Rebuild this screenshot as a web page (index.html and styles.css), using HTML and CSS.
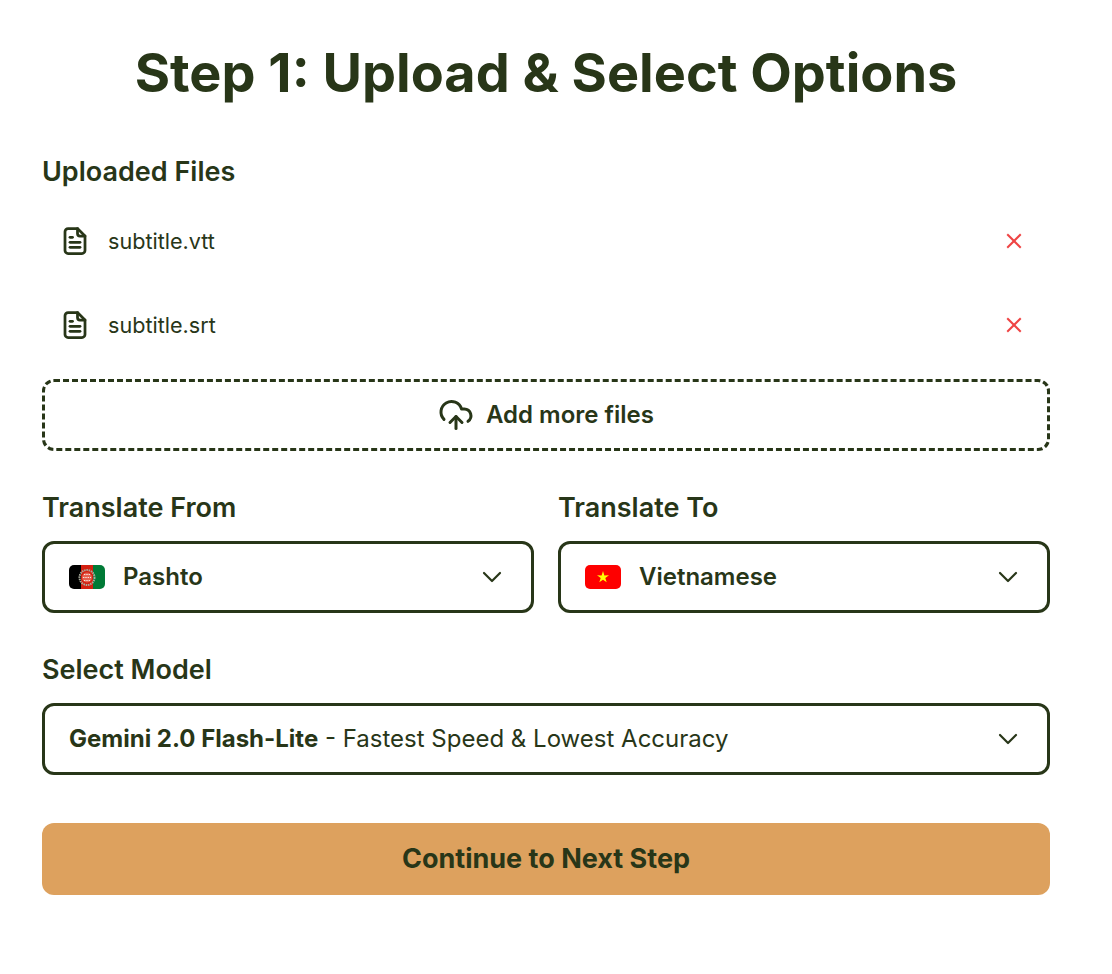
FILE: index.html
```html
<!DOCTYPE html>
<html lang="en">
<head>
    <meta charset="UTF-8">
    <meta name="viewport" content="width=device-width, initial-scale=1.0">
    <title>Upload &amp; Select Options</title>
    <link rel="stylesheet" href="styles.css">
</head>
<body>
    <div class="step-container">
        <h1 class="step-title">Step 1: Upload &amp; Select Options</h1>

        <p class="field-label files-label">Uploaded Files</p>
        <div class="file-list">
            <div class="file-row">
                <svg class="file-icon" viewBox="0 0 24 24" fill="none" stroke="currentColor" stroke-width="2.2" stroke-linecap="round" stroke-linejoin="round">
                    <path d="M14 2H6.5A2.5 2.5 0 0 0 4 4.5v15A2.5 2.5 0 0 0 6.5 22h11a2.5 2.5 0 0 0 2.5-2.5V8z"/>
                    <path d="M14 2v4a2 2 0 0 0 2 2h4"/>
                    <path d="M8 9h2"/>
                    <path d="M8 13h8"/>
                    <path d="M8 17h8"/>
                </svg>
                <span class="file-name">subtitle.vtt</span>
                <svg class="remove-icon" viewBox="0 0 24 24" fill="none" stroke="currentColor" stroke-width="2.7">
                    <path d="M3 3l18 18"/>
                    <path d="M21 3L3 21"/>
                </svg>
            </div>
            <div class="file-row">
                <svg class="file-icon" viewBox="0 0 24 24" fill="none" stroke="currentColor" stroke-width="2.2" stroke-linecap="round" stroke-linejoin="round">
                    <path d="M14 2H6.5A2.5 2.5 0 0 0 4 4.5v15A2.5 2.5 0 0 0 6.5 22h11a2.5 2.5 0 0 0 2.5-2.5V8z"/>
                    <path d="M14 2v4a2 2 0 0 0 2 2h4"/>
                    <path d="M8 9h2"/>
                    <path d="M8 13h8"/>
                    <path d="M8 17h8"/>
                </svg>
                <span class="file-name">subtitle.srt</span>
                <svg class="remove-icon" viewBox="0 0 24 24" fill="none" stroke="currentColor" stroke-width="2.7">
                    <path d="M3 3l18 18"/>
                    <path d="M21 3L3 21"/>
                </svg>
            </div>
        </div>

        <div class="add-files">
            <svg class="upload-icon" viewBox="0 0 24 24" fill="none" stroke="currentColor" stroke-width="2" stroke-linecap="round" stroke-linejoin="round">
                <path d="M12 13v8"/>
                <path d="M4 14.9A7 7 0 1 1 15.7 8h1.8a4.5 4.5 0 0 1 2.5 8.2"/>
                <path d="M8 17l4-4 4 4"/>
            </svg>
            <span class="add-text">Add more files</span>
        </div>

        <div class="language-grid">
            <div class="language-field">
                <p class="field-label">Translate From</p>
                <div class="select-box">
                    <svg class="flag" viewBox="0 0 36 24">
                        <rect width="12" height="24" fill="#000"/>
                        <rect x="12" width="12" height="24" fill="#d32011"/>
                        <rect x="24" width="12" height="24" fill="#007a36"/>
                        <circle cx="18" cy="12.5" r="7.5" fill="none" stroke="#a9ab9c" stroke-width="2" stroke-dasharray="1.5 0.8"/>
                        <circle cx="18" cy="12.5" r="5" fill="#e8604f"/>
                        <path d="M15 9.5h6M14 12.5h8M15 15.5h6" stroke="#f7e4de" stroke-width="1.1" stroke-dasharray="1.4 0.9"/>
                    </svg>
                    <span class="select-text">Pashto</span>
                    <svg class="chevron" viewBox="0 0 24 24" fill="none" stroke="currentColor" stroke-width="2.2" stroke-linecap="round" stroke-linejoin="round">
                        <path d="M4 8l8 8 8-8"/>
                    </svg>
                </div>
            </div>
            <div class="language-field">
                <p class="field-label">Translate To</p>
                <div class="select-box">
                    <svg class="flag" viewBox="0 0 36 24">
                        <rect width="36" height="24" fill="#fe0000"/>
                        <polygon points="18,6 19.4,10.4 24,10.3 20.3,13.1 21.7,17.3 18,14.7 14.3,17.3 15.7,13.1 12,10.3 16.6,10.4" fill="#ffff00"/>
                    </svg>
                    <span class="select-text">Vietnamese</span>
                    <svg class="chevron" viewBox="0 0 24 24" fill="none" stroke="currentColor" stroke-width="2.2" stroke-linecap="round" stroke-linejoin="round">
                        <path d="M4 8l8 8 8-8"/>
                    </svg>
                </div>
            </div>
        </div>

        <p class="field-label model-label">Select Model</p>
        <div class="select-box">
            <span class="model-text"><b>Gemini 2.0 Flash-Lite</b> - Fastest Speed &amp; Lowest Accuracy</span>
            <svg class="chevron" viewBox="0 0 24 24" fill="none" stroke="currentColor" stroke-width="2.2" stroke-linecap="round" stroke-linejoin="round">
                <path d="M4 8l8 8 8-8"/>
            </svg>
        </div>

        <button class="next-button">Continue to Next Step</button>
    </div>
</body>
</html>
```

FILE: styles.css
```css
body {
    margin: 0;
    font-family: Inter, "Liberation Sans", sans-serif;
    background-color: #ffffff;
    color: #283618;
}

.step-container {
    width: 1008px;
    margin-left: 42px;
    padding-top: 37px;
    padding-bottom: 79px;
}

.step-title {
    margin: 0;
    font-size: 54px;
    line-height: 72px;
    font-weight: 700;
    text-align: center;
}

.field-label {
    margin: 0;
    font-size: 27px;
    line-height: 32px;
    font-weight: 600;
}

.files-label {
    margin-top: 47px;
}

.file-list {
    display: flex;
    flex-direction: column;
    gap: 12px;
    margin-top: 17px;
}

.file-row {
    display: flex;
    align-items: center;
    height: 72px;
    padding: 0 27px 0 18px;
    box-sizing: border-box;
}

.file-icon {
    width: 30px;
    height: 30px;
    margin-right: 18px;
}

.file-name {
    flex: 1;
    font-size: 21.6px;
    line-height: 30px;
    font-weight: 400;
    margin-bottom: 1px;
}

.remove-icon {
    width: 18px;
    height: 18px;
    color: #ef4444;
}

.add-files {
    display: flex;
    align-items: center;
    justify-content: center;
    gap: 12px;
    height: 72px;
    margin-top: 18px;
    border: 3px dashed #283618;
    border-radius: 12px;
    box-sizing: border-box;
    font-size: 24px;
    font-weight: 600;
}

.add-text {
    line-height: 30px;
    margin-bottom: 1px;
}

.upload-icon {
    width: 36px;
    height: 36px;
}

.language-grid {
    display: grid;
    grid-template-columns: 1fr 1fr;
    gap: 24px;
    margin-top: 41px;
}

.language-field .field-label {
    margin-bottom: 17px;
}

.select-box {
    display: flex;
    align-items: center;
    height: 72px;
    padding: 0 27px 0 24px;
    border: 3px solid #283618;
    border-radius: 12px;
    box-sizing: border-box;
}

.flag {
    width: 36px;
    height: 24px;
    border-radius: 5px;
    margin-right: 18px;
}

.select-text {
    flex: 1;
    font-size: 24px;
    line-height: 30px;
    font-weight: 600;
    margin-bottom: 1px;
}

.chevron {
    width: 24px;
    height: 24px;
}

.model-label {
    margin-top: 41px;
    margin-bottom: 17px;
}

.model-text {
    flex: 1;
    font-size: 24px;
    line-height: 30px;
    font-weight: 400;
    margin-bottom: 1px;
}

.model-text b {
    font-weight: 700;
}

.next-button {
    display: block;
    width: 100%;
    height: 72px;
    margin-top: 48px;
    padding: 0 0 2px;
    border: none;
    border-radius: 12px;
    background-color: #dda15e;
    color: #283618;
    font-family: inherit;
    font-size: 27px;
    font-weight: 700;
}
```
